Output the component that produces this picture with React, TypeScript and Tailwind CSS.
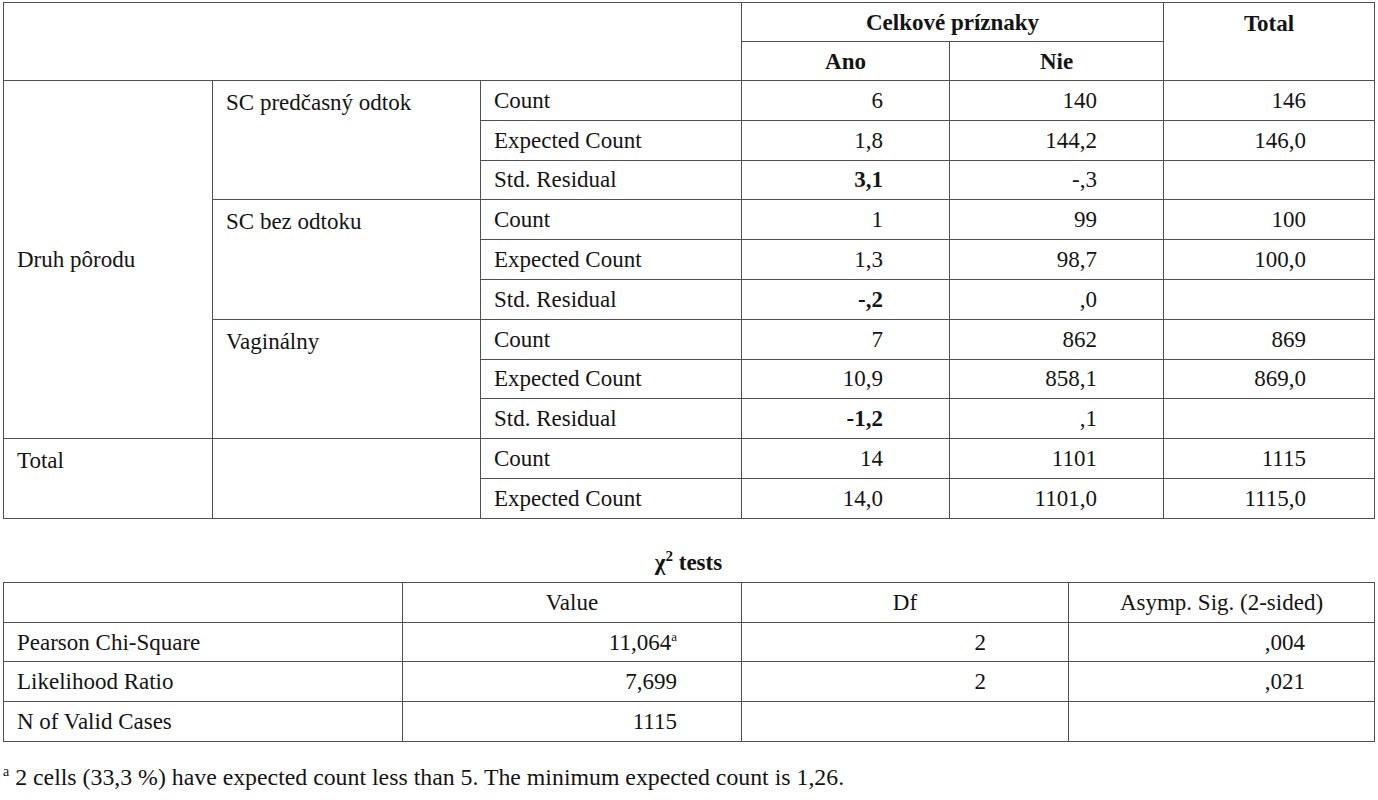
const font = { fontFamily: '"Liberation Serif", "Times New Roman", serif' };

type Row = { label: string; ano: string; nie: string; total: string; boldAno?: boolean };

const groups: { name: string; rows: Row[] }[] = [
  {
    name: 'SC predčasný odtok',
    rows: [
      { label: 'Count', ano: '6', nie: '140', total: '146' },
      { label: 'Expected Count', ano: '1,8', nie: '144,2', total: '146,0' },
      { label: 'Std. Residual', ano: '3,1', nie: '-,3', total: '', boldAno: true },
    ],
  },
  {
    name: 'SC bez odtoku',
    rows: [
      { label: 'Count', ano: '1', nie: '99', total: '100' },
      { label: 'Expected Count', ano: '1,3', nie: '98,7', total: '100,0' },
      { label: 'Std. Residual', ano: '-,2', nie: ',0', total: '', boldAno: true },
    ],
  },
  {
    name: 'Vaginálny',
    rows: [
      { label: 'Count', ano: '7', nie: '862', total: '869' },
      { label: 'Expected Count', ano: '10,9', nie: '858,1', total: '869,0' },
      { label: 'Std. Residual', ano: '-1,2', nie: ',1', total: '', boldAno: true },
    ],
  },
];

const totalRows: Row[] = [
  { label: 'Count', ano: '14', nie: '1101', total: '1115' },
  { label: 'Expected Count', ano: '14,0', nie: '1101,0', total: '1115,0' },
];

const chiRows = [
  { label: 'Pearson Chi-Square', value: '11,064', sup: 'a', df: '2', sig: ',004' },
  { label: 'Likelihood Ratio', value: '7,699', df: '2', sig: ',021' },
  { label: 'N of Valid Cases', value: '1115', df: '', sig: '' },
];

const cell = 'border border-[#505050] px-[13px] py-0';
const num = 'border border-[#505050] pr-[66px] py-0 text-right';

function DataCells({ row }: { row: Row }) {
  return (
    <>
      <td className={`${cell} align-middle`}>{row.label}</td>
      <td className={num}>
        {row.boldAno ? <span className="font-bold">{row.ano}</span> : row.ano}
      </td>
      <td className={num}>{row.nie}</td>
      <td className={`${num} pr-[68px]`}>{row.total}</td>
    </>
  );
}

export default function App() {
  return (
    <div className="bg-white w-[1378px] h-[800px] text-[#141414] text-[23px] leading-none" style={font}>
      <div className="pt-[2px] pl-[3px]">
        <table className="border-collapse table-fixed w-[1371px]">
          <colgroup>
            <col className="w-[209px]" />
            <col className="w-[268px]" />
            <col className="w-[261px]" />
            <col className="w-[208px]" />
            <col className="w-[214px]" />
            <col className="w-[211px]" />
          </colgroup>
          <thead>
            <tr className="h-[39px]">
              <td className={cell} colSpan={3} rowSpan={2} />
              <td className={`${cell} text-center align-middle`} colSpan={2}>
                <span className="font-bold">Celkové príznaky</span>
              </td>
              <td className={`${cell} text-center align-top pt-[9px]`} rowSpan={2}>
                <span className="font-bold">Total</span>
              </td>
            </tr>
            <tr className="h-[39px]">
              <td className={`${cell} text-center align-middle`}>
                <span className="font-bold">Ano</span>
              </td>
              <td className={`${cell} text-center align-middle`}>
                <span className="font-bold">Nie</span>
              </td>
            </tr>
          </thead>
          <tbody>
            {groups.map((g, gi) =>
              g.rows.map((r, ri) => (
                <tr key={`${gi}-${ri}`} className="h-[39.8px]">
                  {gi === 0 && ri === 0 && (
                    <td className={`${cell} align-middle`} rowSpan={9}>
                      Druh pôrodu
                    </td>
                  )}
                  {ri === 0 && (
                    <td className={`${cell} align-top pt-[10px]`} rowSpan={3}>
                      {g.name}
                    </td>
                  )}
                  <DataCells row={r} />
                </tr>
              ))
            )}
            {totalRows.map((r, ri) => (
              <tr key={`t-${ri}`} className="h-[39.8px]">
                {ri === 0 && (
                  <>
                    <td className={`${cell} align-top pt-[10px]`} rowSpan={2}>
                      Total
                    </td>
                    <td className={cell} rowSpan={2} />
                  </>
                )}
                <DataCells row={r} />
              </tr>
            ))}
          </tbody>
        </table>

        {/* chi-square tests */}
        <div className="w-[1371px] text-center font-bold mt-[32px] h-[30px]">
          χ<sup className="text-[15px] -top-[9px]">2</sup> tests
        </div>
        <table className="border-collapse table-fixed w-[1371px] mt-[1px]">
          <colgroup>
            <col className="w-[399px]" />
            <col className="w-[339px]" />
            <col className="w-[327px]" />
            <col className="w-[306px]" />
          </colgroup>
          <thead>
            <tr className="h-[40px]">
              <td className={cell} />
              <td className={`${cell} text-center`}>Value</td>
              <td className={`${cell} text-center`}>Df</td>
              <td className={`${cell} text-center`}>Asymp. Sig. (2-sided)</td>
            </tr>
          </thead>
          <tbody>
            {chiRows.map((r) => (
              <tr key={r.label} className="h-[39.7px]">
                <td className={cell}>{r.label}</td>
                <td className="border border-[#505050] pr-[64px] text-right">
                  {r.value}
                  {r.sup && <sup className="text-[13px] -top-[9px]">{r.sup}</sup>}
                </td>
                <td className="border border-[#505050] pr-[82px] text-right">{r.df}</td>
                <td className="border border-[#505050] pr-[69px] text-right">{r.sig}</td>
              </tr>
            ))}
          </tbody>
        </table>

        <p className="mt-[24px] text-[23.8px]">
          <sup className="text-[14px] -top-[9px]">a</sup> 2 cells (33,3 %) have expected count less than 5.
          The minimum expected count is 1,26.
        </p>
      </div>
    </div>
  );
}
